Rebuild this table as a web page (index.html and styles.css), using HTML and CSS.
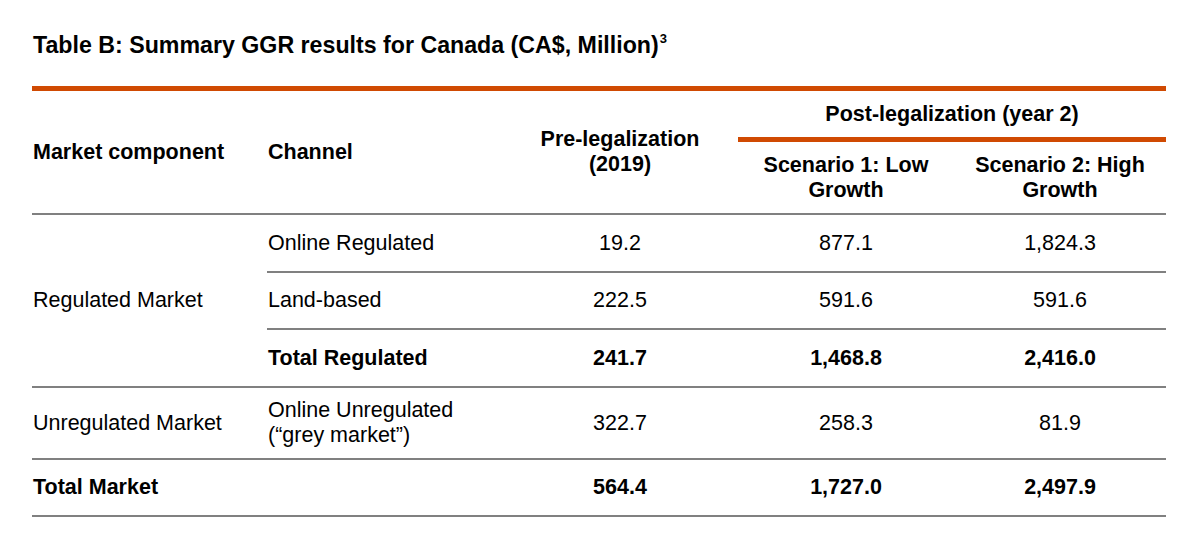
FILE: index.html
```html
<!DOCTYPE html>
<html lang="en">
<head>
<meta charset="utf-8">
<title>Table B: Summary GGR results for Canada</title>
<link rel="stylesheet" href="styles.css">
</head>
<body>
<div class="page">
  <h1 class="title">Table B: Summary GGR results for Canada (CA$, Million)<sup class="note">3</sup></h1>
  <table class="ggr">
    <colgroup>
      <col class="c1"><col class="c2"><col class="c3"><col class="c4"><col class="c5">
    </colgroup>
    <thead>
      <tr class="h1row">
        <th rowspan="2" class="left hb">Market component</th>
        <th rowspan="2" class="left hb">Channel</th>
        <th rowspan="2" class="hb">Pre-legalization<br>(2019)</th>
        <th colspan="2" class="post">Post-legalization (year 2)</th>
      </tr>
      <tr class="h2row">
        <th class="hb sub">Scenario 1: Low<br>Growth</th>
        <th class="hb sub">Scenario 2: High<br>Growth</th>
      </tr>
    </thead>
    <tbody>
      <tr class="r58">
        <td rowspan="3" class="left lb">Regulated Market</td>
        <td class="left lb">Online Regulated</td>
        <td class="lb">19.2</td>
        <td class="lb">877.1</td>
        <td class="lb">1,824.3</td>
      </tr>
      <tr class="r57">
        <td class="left lb">Land-based</td>
        <td class="lb">222.5</td>
        <td class="lb">591.6</td>
        <td class="lb">591.6</td>
      </tr>
      <tr class="r58 bold">
        <td class="left lb">Total Regulated</td>
        <td class="lb">241.7</td>
        <td class="lb">1,468.8</td>
        <td class="lb">2,416.0</td>
      </tr>
      <tr class="r72">
        <td class="left lb">Unregulated Market</td>
        <td class="left lb">Online Unregulated<br>(“grey market”)</td>
        <td class="lb">322.7</td>
        <td class="lb">258.3</td>
        <td class="lb">81.9</td>
      </tr>
      <tr class="r57 bold">
        <td class="left lb">Total Market</td>
        <td class="lb"></td>
        <td class="lb">564.4</td>
        <td class="lb">1,727.0</td>
        <td class="lb">2,497.9</td>
      </tr>
    </tbody>
  </table>
</div>
</body>
</html>
```

FILE: styles.css
```css
html, body {
  margin: 0;
  padding: 0;
  background: #ffffff;
}

body {
  font-family: "Liberation Sans", Arial, sans-serif;
  color: #000000;
}

.page {
  padding: 31px 0 0 32px;
}

.title {
  margin: 0 0 0 1px;
  font-size: 23.2px;
  font-weight: bold;
  line-height: 28px;
}

.note {
  font-size: 13px;
  line-height: 1;
  vertical-align: top;
  position: relative;
  top: 1px;
  margin-left: 1px;
}

.ggr {
  margin-top: 27px;
  width: 1134px;
  border-collapse: separate;
  border-spacing: 0;
  table-layout: fixed;
  border-top: 5px solid #d04a02;
  font-size: 21.5px;
  line-height: 1.15;
}

.c1 { width: 235px; }
.c2 { width: 235px; }
.c3 { width: 236px; }
.c4 { width: 216px; }
.c5 { width: 212px; }

.ggr th,
.ggr td {
  padding: 0;
  text-align: center;
  vertical-align: middle;
}

.ggr th {
  font-weight: bold;
}

.ggr .left {
  text-align: left;
  padding-left: 1px;
}

.h1row { height: 51px; }
.h2row { height: 73px; }

.post {
  border-bottom: 5px solid #d04a02;
}

.sub {
  padding-bottom: 3px;
}

.hb,
.lb {
  border-bottom: 2px solid #808080;
}

.r57 { height: 57px; }
.r58 { height: 58px; }
.r72 { height: 72px; }

.bold td {
  font-weight: bold;
}
```
